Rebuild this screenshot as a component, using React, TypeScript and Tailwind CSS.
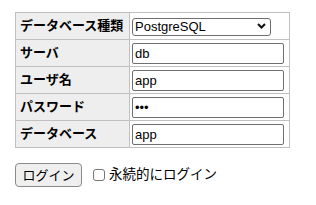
import React from 'react';

const font = { fontFamily: '"Liberation Sans", "Noto Sans CJK JP", sans-serif' };

const rows = [
  { label: 'サーバ', value: 'db', type: 'text' },
  { label: 'ユーザ名', value: 'app', type: 'text' },
  { label: 'パスワード', value: 'app', type: 'password' },
  { label: 'データベース', value: 'app', type: 'text' },
];

export default function App() {
  return (
    <div className="bg-white min-h-screen pt-[12px] pl-[15px] text-black" style={font}>
      <table className="w-[275px] border-collapse border border-[#c0c0c0] text-[13px]">
        <tbody>
          <tr className="h-[27px]">
            <th className="w-[114px] bg-[#eeeeee] border border-[#c0c0c0] px-[4px] text-left font-bold">
              データベース種類
            </th>
            <td className="border border-[#c0c0c0] pl-[2px] pr-[4px]">
              <div className="relative w-[139px] h-[18px]">
                <select
                  defaultValue="pgsql"
                  className="appearance-none w-full h-full border border-[#6f6f6f] rounded-[3px] bg-white pl-[2px] text-[13px] leading-[16px] outline-none"
                  style={font}
                >
                  <option value="pgsql">PostgreSQL</option>
                  <option value="server">MySQL</option>
                </select>
                <svg
                  className="absolute right-[5px] top-[6px] pointer-events-none"
                  width="9"
                  height="6"
                  viewBox="0 0 9 6"
                >
                  <path d="M1 1l3.5 3.5L8 1" fill="none" stroke="#111" strokeWidth="2" />
                </svg>
              </div>
            </td>
          </tr>
          {rows.map((r) => (
            <tr key={r.label} className="h-[27px]">
              <th className="bg-[#eeeeee] border border-[#c0c0c0] px-[4px] text-left font-bold">{r.label}</th>
              <td className="border border-[#c0c0c0] pl-[2px] pr-[4px] py-[2px]">
                <input
                  type={r.type}
                  defaultValue={r.value}
                  className="block w-[152px] h-[21px] border border-[#6f6f6f] rounded-[2px] px-[2px] text-[13px] outline-none"
                  style={font}
                />
              </td>
            </tr>
          ))}
        </tbody>
      </table>
      <div className="flex items-center mt-[15px] text-[13.5px]">
        <button className="w-[67px] h-[24px] border border-[#8a8a8a] rounded-[4px] bg-[#efefef] text-[13px] leading-none">
          ログイン
        </button>
        <label className="flex items-center ml-[11px]">
          <span className="inline-block w-[12px] h-[12px] border border-[#767676] rounded-[3px] bg-white" />
          <span className="ml-[4px]">永続的にログイン</span>
        </label>
      </div>
    </div>
  );
}
